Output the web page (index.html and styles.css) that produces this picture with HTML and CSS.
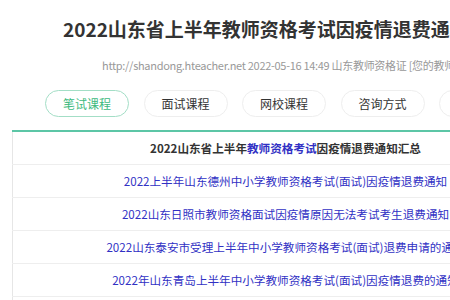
FILE: index.html
```html
<!DOCTYPE html>
<html lang="zh-CN">
<head>
    <meta charset="UTF-8">
    <meta name="viewport" content="width=device-width, initial-scale=1.0">
    <title>2022山东省上半年教师资格考试因疫情退费通知汇总</title>
    <link rel="stylesheet" href="styles.css">
</head>
<body>
    <div class="page">
        <h1 class="title">2022山东省上半年教师资格考试因疫情退费通知汇总</h1>
        <p class="meta">http://shandong.hteacher.net 2022-05-16 14:49 山东教师资格证 [您的教师资格证考试门户]</p>

        <nav class="tabs">
            <a class="tab active" href="#">笔试课程</a>
            <a class="tab" href="#">面试课程</a>
            <a class="tab" href="#">网校课程</a>
            <a class="tab" href="#">咨询方式</a>
            <a class="tab" href="#">考试资讯</a>
        </nav>

        <!-- 通知列表 -->
        <table class="list">
            <tbody>
                <tr>
                    <td class="head">2022山东省上半年<a href="#">教师资格考试</a>因疫情退费通知汇总</td>
                </tr>
                <tr>
                    <td><a href="#">2022上半年山东德州中小学教师资格考试(面试)因疫情退费通知</a></td>
                </tr>
                <tr>
                    <td><a href="#">2022山东日照市教师资格面试因疫情原因无法考试考生退费通知</a></td>
                </tr>
                <tr>
                    <td><a href="#">2022山东泰安市受理上半年中小学教师资格考试(面试)退费申请的通知</a></td>
                </tr>
                <tr>
                    <td><a href="#">2022年山东青岛上半年中小学教师资格考试(面试)因疫情退费的通知</a></td>
                </tr>
                <tr>
                    <td><a href="#">2022山东济南市中小学教师资格考试(面试)退费通知</a></td>
                </tr>
            </tbody>
        </table>
    </div>
</body>
</html>
```

FILE: styles.css
```css
body {
    margin: 0;
    padding: 0;
    overflow: hidden;
    background-color: #fff;
    font-family: "Noto Sans CJK SC", "Noto Sans", sans-serif;
    color: #333;
}

.page {
    width: 560px;
}

.title {
    margin: 15px 0 0 0;
    padding-left: 63px;
    font-size: 19px;
    line-height: 28px;
    font-weight: bold;
    color: #333;
    white-space: nowrap;
}

.meta {
    margin: 12px 0 0 0;
    padding-left: 102px;
    font-size: 11px;
    line-height: 20px;
    letter-spacing: -0.3px;
    color: #999;
    white-space: nowrap;
}

.tabs {
    display: flex;
    gap: 14.5px;
    margin-top: 15px;
    padding-left: 45px;
}

.tab {
    flex: none;
    width: 82px;
    height: 25px;
    line-height: 25px;
    border: 1px solid #eee;
    border-radius: 14px;
    text-align: center;
    font-size: 12px;
    color: #333;
    text-decoration: none;
}

.tab.active {
    border-color: #a3dec6;
    color: #3dba7e;
}

.list {
    margin: 13px 0 0 12px;
    width: 546px;
    border-collapse: collapse;
    border-top: 2px solid #5cc6a6;
    border-left: 1px solid #e6e6e6;
}

.list td {
    height: 32px;
    padding: 0;
    border-bottom: 1px solid #eee;
    text-align: center;
    font-size: 11.6px;
    white-space: nowrap;
}

.list a {
    color: #3131c4;
    text-decoration: none;
}

.list .head {
    font-weight: bold;
    color: #333;
}
```
